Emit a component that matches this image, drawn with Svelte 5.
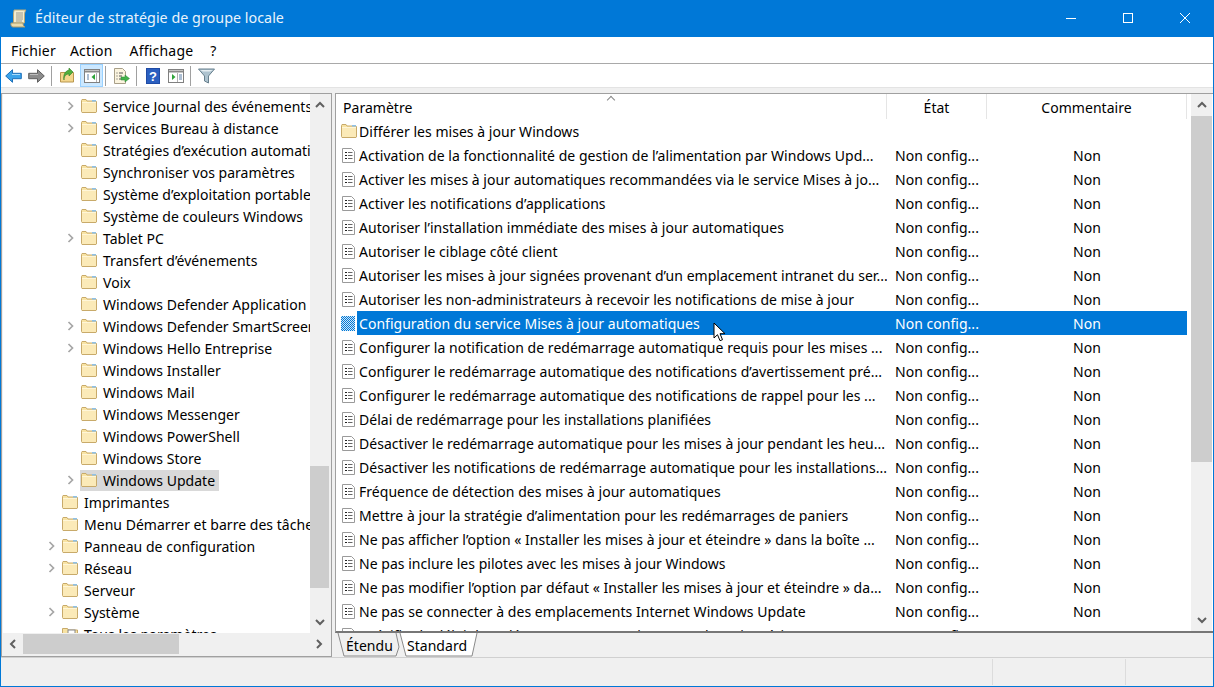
<script lang="ts">
  const tree = [
    { label: 'Service Journal des événements', depth: 1, arrow: true },
    { label: 'Services Bureau à distance', depth: 1, arrow: true },
    { label: 'Stratégies d’exécution automatique', depth: 1, arrow: false },
    { label: 'Synchroniser vos paramètres', depth: 1, arrow: false },
    { label: 'Système d’exploitation portable', depth: 1, arrow: false },
    { label: 'Système de couleurs Windows', depth: 1, arrow: false },
    { label: 'Tablet PC', depth: 1, arrow: true },
    { label: 'Transfert d’événements', depth: 1, arrow: false },
    { label: 'Voix', depth: 1, arrow: false },
    { label: 'Windows Defender Application Guard', depth: 1, arrow: false },
    { label: 'Windows Defender SmartScreen', depth: 1, arrow: true },
    { label: 'Windows Hello Entreprise', depth: 1, arrow: true },
    { label: 'Windows Installer', depth: 1, arrow: false },
    { label: 'Windows Mail', depth: 1, arrow: false },
    { label: 'Windows Messenger', depth: 1, arrow: false },
    { label: 'Windows PowerShell', depth: 1, arrow: false },
    { label: 'Windows Store', depth: 1, arrow: false },
    { label: 'Windows Update', depth: 1, arrow: true, current: true },
    { label: 'Imprimantes', depth: 0, arrow: false },
    { label: 'Menu Démarrer et barre des tâches', depth: 0, arrow: false },
    { label: 'Panneau de configuration', depth: 0, arrow: true },
    { label: 'Réseau', depth: 0, arrow: true },
    { label: 'Serveur', depth: 0, arrow: false },
    { label: 'Système', depth: 0, arrow: true },
    { label: 'Tous les paramètres', depth: 0, arrow: false, settings: true }
  ];

  const policies = [
    'Activation de la fonctionnalité de gestion de l’alimentation par Windows Upd...',
    'Activer les mises à jour automatiques recommandées via le service Mises à jo...',
    'Activer les notifications d’applications',
    'Autoriser l’installation immédiate des mises à jour automatiques',
    'Autoriser le ciblage côté client',
    'Autoriser les mises à jour signées provenant d’un emplacement intranet du ser...',
    'Autoriser les non-administrateurs à recevoir les notifications de mise à jour',
    'Configuration du service Mises à jour automatiques',
    'Configurer la notification de redémarrage automatique requis pour les mises ...',
    'Configurer le redémarrage automatique des notifications d’avertissement pré...',
    'Configurer le redémarrage automatique des notifications de rappel pour les ...',
    'Délai de redémarrage pour les installations planifiées',
    'Désactiver le redémarrage automatique pour les mises à jour pendant les heu...',
    'Désactiver les notifications de redémarrage automatique pour les installations...',
    'Fréquence de détection des mises à jour automatiques',
    'Mettre à jour la stratégie d’alimentation pour les redémarrages de paniers',
    'Ne pas afficher l’option « Installer les mises à jour et éteindre » dans la boîte ...',
    'Ne pas inclure les pilotes avec les mises à jour Windows',
    'Ne pas modifier l’option par défaut « Installer les mises à jour et éteindre » da...',
    'Ne pas se connecter à des emplacements Internet Windows Update',
    'Spécifier le délai de redémarrage automatique pour les mises à jour...'
  ];

  const selected = 'Configuration du service Mises à jour automatiques';
</script>

{#snippet folder()}
  <svg class="ico" width="16" height="14" viewBox="0 0 16 14">
    <path d="M.5 12.500V1.500l.5-1h4l1 1.500h9l.5.5v10.500l-.5.5H1z" fill="#f8e3a3" stroke="#c8aa6a"/>
    <rect x="1" y="4" width="14" height="9" fill="#fbeab8"/>
    <rect x="11" y="1" width="4" height="1.600" fill="#8fc1e6"/>
    <path d="M1 3.500h14" stroke="#fff6d8"/>
  </svg>
{/snippet}

{#snippet doc()}
  <svg class="ico doc" width="13" height="15" viewBox="0 0 13 15">
    <path d="M.5.500h9l3 3v11H.5z" fill="#fff" stroke="#9a9a9a"/>
    <path d="M3 4.500h2M3 7.500h2M3 10.500h2" stroke="#222"/>
    <path d="M6 4.500h4.500M6 7.500h4.500M6 10.500h4.500" stroke="#666"/>
  </svg>
{/snippet}

{#snippet chevron(d: string)}
  <svg width="10" height="10" viewBox="0 0 10 10"><path {d} fill="none" stroke="#606060" stroke-width="2"/></svg>
{/snippet}

<div class="window">
  <header class="titlebar">
    <svg width="18" height="19" viewBox="0 0 18 19" class="app-icon">
      <path d="M4 1h12c-1 1-1.500 3-1.500 5v8H3.500V5C3.500 3 4 2 4 1z" fill="#f4edcf" stroke="#b7a878"/>
      <path d="M6 4h7M6 6h7M6 8h7M6 10h7M6 12h6" stroke="#9a9a90"/>
      <path d="M1 14h12c0 2 .5 3 2 4H3c-1.500 0-2.500-2-2-4z" fill="#e9dcae" stroke="#a89a6c"/>
    </svg>
    <span class="title">Éditeur de stratégie de groupe locale</span>
    <div class="win-buttons">
      <svg width="12" height="12" viewBox="0 0 12 12"><path d="M1 6.500h10" stroke="#fff"/></svg>
      <svg width="12" height="12" viewBox="0 0 12 12"><rect x="1.500" y="1.500" width="9" height="9" fill="none" stroke="#fff"/></svg>
      <svg width="12" height="12" viewBox="0 0 12 12"><path d="M1 1l10 10M11 1L1 11" stroke="#fff"/></svg>
    </div>
  </header>

  <nav class="menubar">
    <span class="m-file">Fichier</span><span>Action</span><span class="m-view">Affichage</span><span>?</span>
  </nav>

  <div class="toolbar">
    <button class="tool" aria-label="Précédent">
      <svg width="17" height="14" viewBox="0 0 17 14"><path d="M.7 7L7.500.7v3.600h8.800v5.400H7.500v3.600z" fill="#3aa3ea" stroke="#1d6fb8"/><path d="M7 5.500h8" stroke="#a7dcfb"/></svg>
    </button>
    <button class="tool" aria-label="Suivant">
      <svg width="17" height="14" viewBox="0 0 17 14"><path d="M16.300 7L9.500.7v3.600H.7v5.400h8.800v3.600z" fill="#8c8c8c" stroke="#5e5e5e"/><path d="M2 5.500h8" stroke="#bdbdbd"/></svg>
    </button>
    <i class="sep"></i>
    <button class="tool" aria-label="Dossier parent">
      <svg width="15" height="15" viewBox="0 0 15 15"><path d="M.5 14V4.500h13V14z" fill="#f4d68c" stroke="#b8964e"/><path d="M4 12c0-4 2-6 5-6V8l4-4-4-4v2C5 3 3 7 4 12z" fill="#4fae3c" stroke="#2f7d24" stroke-width=".6"/></svg>
    </button>
    <button class="tool active" aria-label="Afficher l’arborescence">
      <svg width="16" height="14" viewBox="0 0 16 14"><rect x=".5" y=".5" width="15" height="13" fill="#fff" stroke="#808080"/><path d="M1 1.500h14v2H1z" fill="#8a8a8a"/><path d="M3 6h2M3 8h2M3 10h2" stroke="#5a7fa8"/><path d="M11 5v6L7.500 8z" fill="#2fa43a"/><path d="M12.500 4v9" stroke="#b0b0b0"/></svg>
    </button>
    <i class="sep"></i>
    <button class="tool" aria-label="Exporter">
      <svg width="17" height="16" viewBox="0 0 17 16"><path d="M1.500.5h8l3 3v12h-11z" fill="#fbf4df" stroke="#a89f88"/><path d="M3.500 5h1M3.500 8h1M3.500 11h1M6 5h4M6 8h3M6 11h2" stroke="#555"/><path d="M8 9h4V7l4.500 3.500L12 14v-2H8z" fill="#43b14b" stroke="#2e8a36" stroke-width=".5"/></svg>
    </button>
    <i class="sep"></i>
    <button class="tool" aria-label="Aide">
      <svg width="14" height="16" viewBox="0 0 14 16"><rect width="14" height="16" fill="#1f4ba5"/><rect x="1" y="1" width="12" height="14" fill="#2b5fc0"/><text x="7" y="13" text-anchor="middle" font-size="13" font-weight="700" font-family="Liberation Sans, sans-serif" fill="#fff">?</text></svg>
    </button>
    <button class="tool" aria-label="Afficher le volet">
      <svg width="16" height="14" viewBox="0 0 16 14"><rect x=".5" y=".5" width="15" height="13" fill="#fff" stroke="#808080"/><path d="M1 1.500h14v2H1z" fill="#8a8a8a"/><path d="M4 5v6l3.500-3z" fill="#2fa43a"/><path d="M9.500 4v9" stroke="#b0b0b0"/><path d="M11 6h3M11 8h3M11 10h3" stroke="#5a7fa8"/></svg>
    </button>
    <i class="sep"></i>
    <button class="tool" aria-label="Filtrer">
      <svg width="17" height="16" viewBox="0 0 17 16"><path d="M.5 1h16l-6 7v7l-4-2V8z" fill="#aec3cf" stroke="#68808e"/><path d="M2 2h13l-3 1.500H5z" fill="#e6eef2"/></svg>
    </button>
  </div>

  <main class="workspace">
    <section class="left-pane">
      <div class="left-top">
        <ul class="tree">
          {#each tree as node}
            <li class="node" class:root={node.depth === 0}>
              <span class="expander">
                {#if node.arrow}
                  <svg width="8" height="10" viewBox="0 0 8 10"><path d="M1.500 1l4 4-4 4" fill="none" stroke="#a6a6a6" stroke-width="1.700"/></svg>
                {/if}
              </span>
              <span class="node-body" class:current={node.current}>
                {#if node.settings}
                  <svg class="ico" width="16" height="14" viewBox="0 0 16 14">
                    <path d="M.5 13V1.500h5l1 1.500h9v10z" fill="#f8e3a3" stroke="#c8aa6a"/>
                    <rect x="6" y="3" width="7" height="9" fill="#fff" stroke="#888"/>
                  </svg>
                {:else}
                  {@render folder()}
                {/if}
                <span class="node-label">{node.label}</span>
              </span>
            </li>
          {/each}
        </ul>
        <div class="vscroll left-v">
          <div class="arrow">{@render chevron('M1 7l4-4 4 4')}</div>
          <div class="track"><div class="thumb"></div></div>
          <div class="arrow">{@render chevron('M1 3l4 4 4-4')}</div>
        </div>
      </div>
      <div class="hscroll">
        <div class="harrow">{@render chevron('M7 1L3 5l4 4')}</div>
        <div class="hthumb"></div>
        <div class="harrow">{@render chevron('M3 1l4 4-4 4')}</div>
      </div>
    </section>

    <section class="right-pane">
      <div class="list-area">
        <div class="list">
          <div class="list-head">
            <span class="sort-mark"></span>
            <div class="h-name">Paramètre</div>
            <div class="h-state">État</div>
            <div class="h-comment">Commentaire</div>
          </div>
          <div class="rows">
            <div class="row">
              <span class="row-icon">{@render folder()}</span>
              <div class="cells"><span class="c-name">Différer les mises à jour Windows</span></div>
            </div>
            {#each policies as p}
              <div class="row" class:sel={p === selected}>
                <span class="row-icon">
                  {#if p === selected}
                    <span class="dither"></span>
                  {:else}
                    {@render doc()}
                  {/if}
                </span>
                <div class="cells">
                  <span class="c-name">{p}</span>
                  <span class="c-state">Non config...</span>
                  <span class="c-comment">Non</span>
                </div>
              </div>
            {/each}
          </div>
        </div>
        <div class="vscroll right-v">
          <div class="arrow head-arrow">{@render chevron('M1 7l4-4 4 4')}</div>
          <div class="track"><div class="thumb"></div></div>
          <div class="arrow">{@render chevron('M1 3l4 4 4-4')}</div>
        </div>
      </div>
      <div class="tabs">
        <div class="tab">
          <svg class="tab-shape" width="66" height="24" viewBox="0 0 66 24"><path d="M1 0l6 23h52l3-9-3-14" fill="#f0f0f0" stroke="#8a8a8a"/></svg>
          <span>Étendu</span>
        </div>
        <div class="tab front">
          <svg class="tab-shape" width="82" height="24" viewBox="0 0 82 24"><path d="M1 0l6 23h66l5-23" fill="#fff" stroke="#8a8a8a"/></svg>
          <span>Standard</span>
        </div>
      </div>
    </section>
  </main>

  <footer class="statusbar">
    <div class="s-main"></div>
    <div class="s-mid"></div>
    <div class="s-end"></div>
  </footer>

  <svg class="cursor" width="14" height="21" viewBox="0 0 14 21">
    <path d="M1 1v15l3.500-3.300 2.500 6 2.500-1-2.500-6H12z" fill="#fff" stroke="#000"/>
  </svg>
</div>

<style>
  :global(body) {
    margin: 0;
    background: #f0f0f0;
  }

  .window {
    position: relative;
    box-sizing: border-box;
    width: 1214px;
    height: 687px;
    display: flex;
    flex-direction: column;
    overflow: hidden;
    border: solid #0078d7;
    border-width: 0 1px 1px 1px;
    background: #f0f0f0;
    font-family: "Noto Sans", sans-serif;
    font-size: 14px;
    letter-spacing: 0.03px;
    color: #000;
  }

  .titlebar {
    height: 37px;
    flex: none;
    margin: 0 -1px;
    background: #0078d7;
    color: #fff;
    display: flex;
    align-items: center;
  }

  .app-icon {
    margin-left: 10px;
  }

  .title {
    margin-left: 7px;
    margin-bottom: 2px;
    font-size: 14.3px;
    color: #e8f3fb;
  }

  .win-buttons {
    margin-left: auto;
    display: flex;
    gap: 45px;
    margin-right: 23px;
    margin-bottom: 1px;
  }

  .menubar {
    height: 27px;
    flex: none;
    box-sizing: border-box;
    background: #fff;
    border-bottom: 1px solid #a9a9a9;
    display: flex;
    align-items: center;
    gap: 16px;
    padding: 1px 0 0 10px;
    letter-spacing: 0.2px;
  }

  .m-file {
    margin-right: -2px;
  }

  .m-view {
    margin: 0 1px 0 1px;
  }

  .toolbar {
    height: 23px;
    flex: none;
    background: #fff;
    display: flex;
    align-items: center;
    padding-left: 1px;
  }

  .tool {
    all: unset;
    box-sizing: border-box;
    width: 23px;
    height: 23px;
    display: flex;
    align-items: center;
    justify-content: center;
  }

  .tool.active {
    background: #cce8ff;
    border: 1px solid #99d1ff;
    margin: 0 -1px 0 1px;
  }

  .sep {
    width: 1px;
    height: 20px;
    margin: 0 4px 0 3px;
    background: #a0a0a0;
  }

  .workspace {
    flex: 1;
    min-height: 0;
    display: flex;
    gap: 3px;
    padding-top: 6px;
    background: linear-gradient(#e3e3e3 0, #e3e3e3 1px, #f0f0f0 1px);
  }

  .left-pane {
    width: 331px;
    flex: none;
    box-sizing: border-box;
    border: 1px solid #a0a0a0;
    display: flex;
    flex-direction: column;
    padding: 0 2px 2px 1px;
  }

  .left-top {
    flex: 1;
    min-height: 0;
    display: flex;
    background: #fff;
  }

  .tree {
    flex: 1;
    min-width: 0;
    list-style: none;
    margin: 0;
    padding: 1px 0 0;
    overflow: hidden;
  }

  .node {
    height: 22px;
    display: flex;
    align-items: center;
    white-space: nowrap;
    padding-left: 60px;
  }

  .node.root {
    padding-left: 41px;
  }

  .expander {
    width: 15px;
    flex: none;
    margin-right: 2px;
    display: flex;
    justify-content: center;
  }

  .node-body {
    flex: none;
    height: 21px;
    display: flex;
    align-items: center;
    padding: 0 4px 0 1px;
  }

  .node-body.current {
    background: #d9d9d9;
  }

  .node-label {
    margin-left: 6px;
  }

  .ico {
    flex: none;
  }

  .doc {
    margin-left: 1px;
  }

  .vscroll {
    width: 19px;
    flex: none;
    background: #f0f0f0;
    display: flex;
    flex-direction: column;
  }

  .arrow {
    height: 22px;
    flex: none;
    display: flex;
    align-items: center;
    justify-content: center;
  }

  .track {
    flex: 1;
    min-height: 0;
  }

  .thumb {
    background: #cdcdcd;
  }

  .left-v .thumb {
    margin-top: 350px;
    height: 122px;
  }

  .right-v {
    width: 21px;
    margin-right: 1px;
  }

  .right-v .thumb {
    height: 346px;
  }

  .hscroll {
    height: 20px;
    flex: none;
    margin-top: 1px;
    display: flex;
    align-items: center;
  }

  .harrow {
    width: 20px;
    display: flex;
    justify-content: center;
  }

  .hthumb {
    width: 156px;
    height: 100%;
    background: #cdcdcd;
    margin-right: 130px;
  }

  .harrow:last-child {
    margin-left: auto;
  }

  .right-pane {
    flex: 1;
    min-width: 0;
    display: flex;
    flex-direction: column;
  }

  .list-area {
    height: 540px;
    flex: none;
    box-sizing: border-box;
    display: flex;
    background: #fff;
    border-top: 1px solid #a0a0a0;
    border-left: 1px solid #a0a0a0;
    border-bottom: 2px solid #777;
  }

  .list {
    flex: 1;
    min-width: 0;
    overflow: hidden;
  }

  .list-head {
    position: relative;
    height: 25px;
    display: flex;
    align-items: center;
  }

  .sort-mark {
    position: absolute;
    left: 272px;
    top: 3px;
    width: 5px;
    height: 5px;
    border-top: 1px solid #888;
    border-left: 1px solid #888;
    transform: rotate(45deg);
  }

  .list-head > div {
    height: 25px;
    line-height: 27px;
    box-sizing: border-box;
    border-right: 1px solid #e5e5e5;
  }

  .h-name {
    width: 551px;
    padding-left: 7px;
  }

  .h-state {
    width: 100px;
    text-align: center;
  }

  .h-comment {
    width: 200px;
    text-align: center;
  }

  .row {
    height: 24px;
    display: flex;
    align-items: center;
    white-space: nowrap;
  }

  .row-icon {
    width: 21px;
    flex: none;
    display: flex;
    padding-left: 5px;
    box-sizing: border-box;
  }

  .dither {
    width: 14px;
    height: 15px;
    background: repeating-conic-gradient(#0078d7 0 25%, #cfe6f7 0 50%) 0 0 / 2px 2px;
  }

  .cells {
    width: 830px;
    height: 100%;
    display: flex;
    align-items: center;
  }

  .sel .cells {
    background: #0078d7;
    color: #fff;
  }

  .c-name {
    width: 530px;
    flex: none;
    padding-left: 2px;
    box-sizing: border-box;
    overflow: hidden;
  }

  .c-state {
    width: 186px;
    flex: none;
    box-sizing: border-box;
    padding-left: 8px;
  }

  .tabs {
    flex: 1;
    display: flex;
    padding-left: 2px;
  }

  .tab {
    position: relative;
    height: 24px;
    display: flex;
    align-items: center;
    width: 62px;
    padding-left: 9px;
    box-sizing: border-box;
  }

  .tab.front {
    width: 82px;
    padding-left: 8px;
  }

  .tab span {
    position: relative;
  }

  .tab-shape {
    position: absolute;
    left: 0;
    top: 0;
  }

  .statusbar {
    height: 29px;
    flex: none;
    box-sizing: border-box;
    display: flex;
    border-top: 1px solid #d0d0d0;
    padding: 1px 2px 1px 0;
  }

  .s-main {
    width: 991px;
    border-right: 1px solid #dcdcdc;
  }

  .s-mid {
    width: 132px;
    border-right: 1px solid #dcdcdc;
  }

  .s-end {
    flex: 1;
  }

  .cursor {
    position: absolute;
    left: 712px;
    top: 322px;
  }
</style>
